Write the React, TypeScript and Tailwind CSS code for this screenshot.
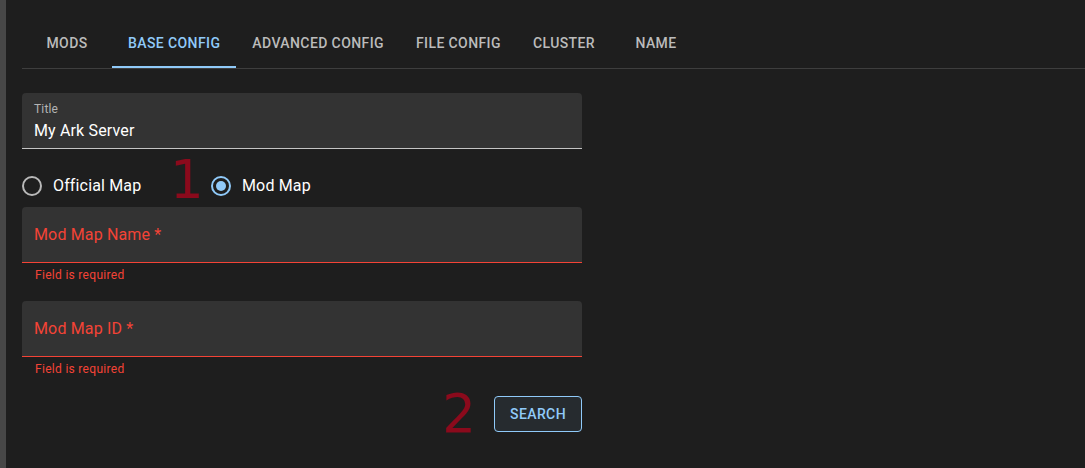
import React from 'react';

const tabs = ['Mods', 'Base Config', 'Advanced Config', 'File Config', 'Cluster', 'Name'];

const Radio = ({ checked }: { checked: boolean }) => (
  <span
    className={`flex h-[20px] w-[20px] items-center justify-center rounded-full border-2 ${
      checked ? 'border-[#90caf9]' : 'border-[#b9b9b9]'
    }`}
  >
    {checked && <span className="h-[10px] w-[10px] rounded-full bg-[#90caf9]" />}
  </span>
);

const ErrorField = ({ label }: { label: string }) => (
  <div>
    <div className="flex h-[56px] items-center rounded-t-[4px] border-b border-[#f44336] bg-[#333333] px-[12px]">
      <span className="text-[16px] tracking-[0.15px] text-[#f44336]">{label} *</span>
    </div>
    <p className="mt-[2px] px-[13px] text-[12px] leading-[20px] tracking-[0.3px] text-[#f44336]">Field is required</p>
  </div>
);

export default function App() {
  const active = 1;

  return (
    <div className="flex h-[468px] w-[1085px] bg-[#1e1e1e] font-['Roboto',sans-serif]">
      <div className="w-[6px] shrink-0 bg-[#474747]" />
      <div className="flex-1 pl-[16px]">
        <div className="mt-[20px] flex border-b border-[#3e3e3e]">
          {tabs.map((t, i) => (
            <div
              key={t}
              className={`relative flex h-[48px] min-w-[90px] items-center justify-center px-[16px] pb-[1px] text-[14px] font-medium uppercase tracking-[0.4px] ${
                i === active ? 'text-[#90caf9]' : 'text-[#bbbbbb]'
              }`}
            >
              {t}
              {i === active && <span className="absolute bottom-0 left-0 right-0 h-[2px] bg-[#90caf9]" />}
            </div>
          ))}
        </div>

        <div className="mt-[24px] w-[560px]">
          <div className="h-[56px] rounded-t-[4px] border-b border-[#c4c4c4] bg-[#333333] px-[12px] pt-[8px]">
            <div className="text-[12px] leading-[16px] tracking-[0.15px] text-[#b3b3b3]">Title</div>
            <div className="mt-[2px] text-[16px] leading-[24px] tracking-[0.15px] text-white">My Ark Server</div>
          </div>

          <div className="mt-[16px] flex h-[42px] items-center text-[16px] tracking-[0.15px] text-white">
            <div className="flex w-[148px] items-center gap-[11px]">
              <Radio checked={false} />
              <span>Official Map</span>
            </div>
            <span className="w-[41px] -translate-y-[6px] font-['DejaVu_Sans',sans-serif] text-[53px] leading-[42px] tracking-normal text-[#8b0a1c]">
              1
            </span>
            <div className="flex items-center gap-[11px]">
              <Radio checked />
              <span>Mod Map</span>
            </div>
          </div>

          <ErrorField label="Mod Map Name" />
          <div className="mt-[16px]">
            <ErrorField label="Mod Map ID" />
          </div>

          <div className="mt-[17px] flex items-center justify-end gap-[18px]">
            <span className="font-['DejaVu_Sans',sans-serif] text-[53px] leading-[36px] text-[#8b0a1c]">2</span>
            <button className="h-[36px] w-[88px] rounded-[4px] border border-[#90caf9] bg-[#262b2f] text-[14px] font-medium uppercase tracking-[0.4px] text-[#90caf9]">
              Search
            </button>
          </div>
        </div>
      </div>
    </div>
  );
}
